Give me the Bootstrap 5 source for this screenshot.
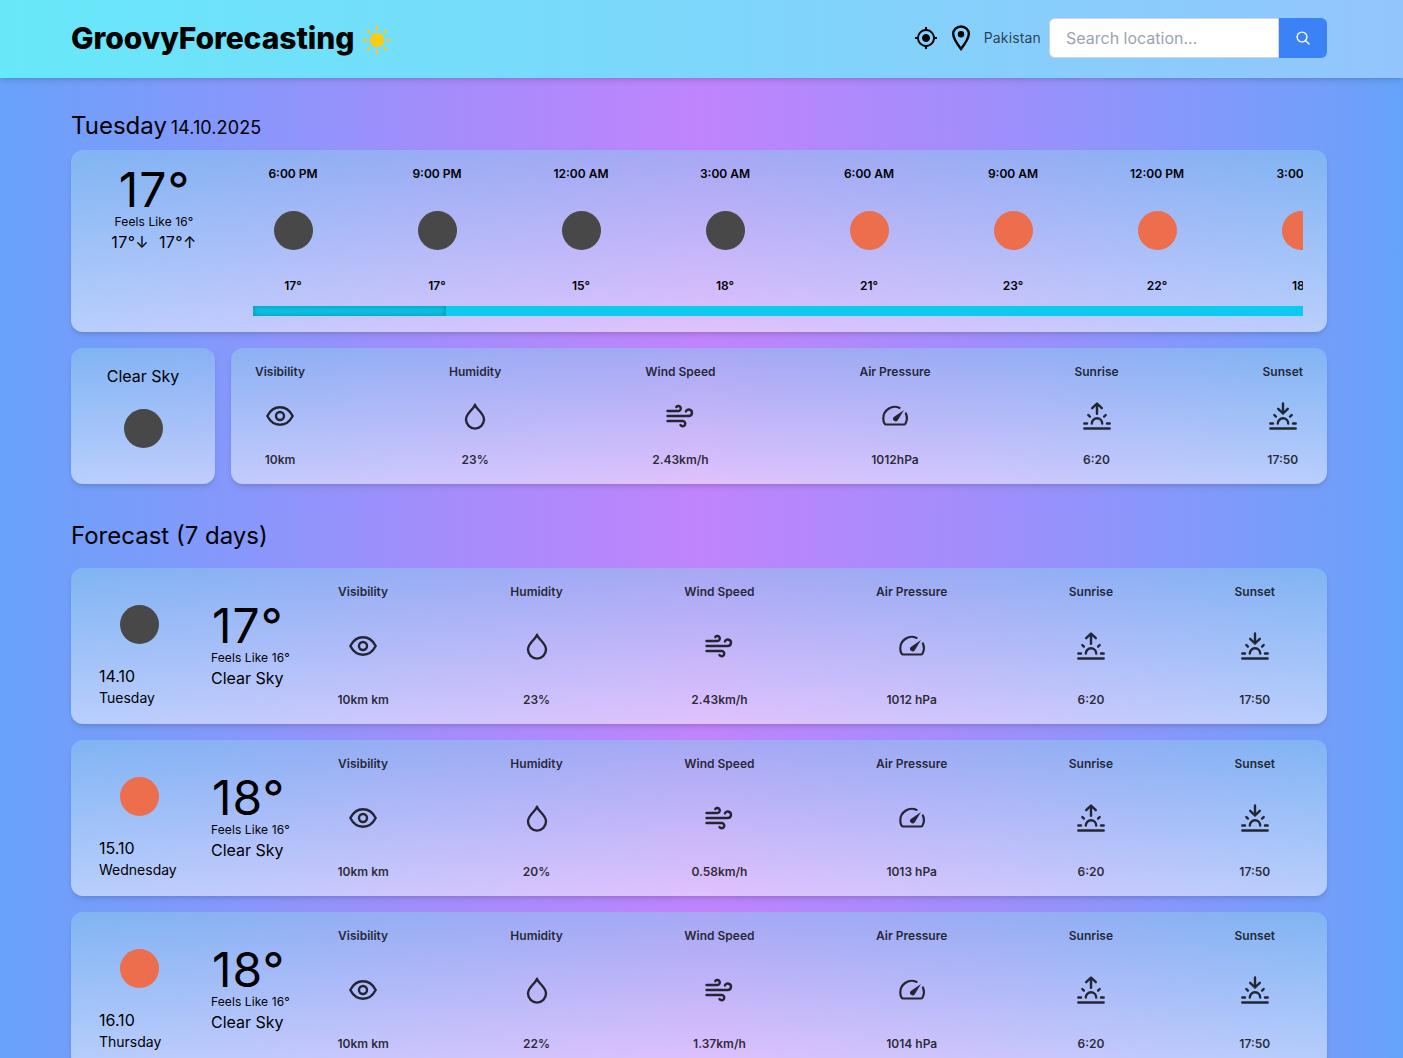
<!DOCTYPE html>
<html lang="en">
<head>
<meta charset="utf-8">
<meta name="viewport" content="width=device-width, initial-scale=1">
<title>GroovyForecasting</title>
<link href="https://cdn.jsdelivr.net/npm/bootstrap@5.3.0/dist/css/bootstrap.min.css" rel="stylesheet">
<style>
html{overflow:hidden}
body{font-family:Inter,sans-serif;font-size:16px;line-height:24px;color:#000;height:1058px;overflow:hidden;background:linear-gradient(to right,#68a2fb,#709ffa 4.3%,#8598fb 16%,#a18efb 30%,#c084fc 50%,#a18efb 70%,#8598fb 84%,#709ffa 95.7%,#65a3fa)}
.wrap{width:1256px;margin-left:71px}
.topbar{height:78px;padding-bottom:2px;background:linear-gradient(to right,#67e8f9,#93c5fd);box-shadow:0 4px 6px -1px rgba(0,0,0,.1),0 2px 4px -2px rgba(0,0,0,.1)}
.brand{font-size:30px;line-height:36px;font-weight:800;letter-spacing:-.06px}
.place{font-size:14px;line-height:20px;letter-spacing:.15px;color:rgba(17,24,39,.8)}
.search-field{width:230px;height:40px;border:1px solid #d1d5db;border-radius:6px 0 0 6px;padding:0 16px;font-size:16px}
.search-field::placeholder{color:#9ca3af;opacity:1}
.search-btn{width:48px;height:40px;border-radius:0 6px 6px 0;background:#3b82f6;border:0;padding:0;color:#fff}
.heading{font-size:24px;line-height:32px;font-weight:400}
.heading.today-title{height:64px;padding-top:32px;margin-bottom:8px}
.heading small{font-size:18px;line-height:28px;letter-spacing:.1px;margin-left:-3px}
.heading.week-title{margin:36px 0 16px}
.panel{border-radius:12px;padding:16px 24px;background:linear-gradient(to bottom,rgba(142,202,236,.5),rgba(255,255,255,.5));box-shadow:0 4px 6px -1px rgba(0,0,0,.1),0 2px 4px -2px rgba(0,0,0,.1)}
.big{font-size:48px;line-height:48px;letter-spacing:1px;padding-left:1px}
.tiny{font-size:12px;line-height:16px;letter-spacing:.1px}
.lohi{letter-spacing:.4px}
.now{flex:none;width:118px;margin-right:40px}
.hours{gap:64px;overflow:hidden}
.hour{width:80px;flex:none;font-size:12px;line-height:16px;font-weight:600}
.wicon{width:80px;height:80px;display:flex;align-items:center;justify-content:center}
.wicon::before{content:"";width:39px;height:39px;border-radius:50%;background:#484849}
.wicon.day::before{background:#ec6e4c}
.track{height:10px;margin-top:12px;background:#0ccaf0}
.thumb{width:193px;height:10px;background:rgba(0,0,0,.02);box-shadow:inset 0 0 6px rgba(0,0,0,.3)}
.sky{width:144px;padding:16px 0}
.metric{display:flex;flex-direction:column;align-items:center;justify-content:space-between;font-size:12px;line-height:16px;font-weight:600;color:rgba(0,0,0,.8)}
.metric svg,.strokes{fill:none;stroke:currentColor;stroke-linecap:round;stroke-linejoin:round}
.metric svg{stroke-width:2.4}
.cards{gap:16px}
.dayrow{height:156px;padding:16px 52px 16px 28px}
.datecol{width:80px;margin-right:32px}
.tempcol{width:78.5px;margin-right:48px;white-space:nowrap}
.weekday{font-size:14px;line-height:20px}
</style>
<script src="https://cdn.jsdelivr.net/npm/bootstrap@5.3.0/dist/js/bootstrap.bundle.min.js"></script>
</head>
<body>
<svg class="d-none">
<symbol id="eye" viewBox="0 0 32 32"><path d="M3.300 16c3-5.700 7.300-8.700 12.700-8.700S25.700 10.300 28.700 16c-3 5.700-7.300 8.700-12.700 8.700S6.300 21.700 3.300 16z"/><circle cx="16" cy="16" r="4"/></symbol>
<symbol id="drop" viewBox="0 0 32 32"><path d="M16 4.800c-.8 4.200-9 8-9 14.800a9 9 0 0 0 18 0c0-6.800-8.200-10.600-9-14.800z"/></symbol>
<symbol id="wind" viewBox="0 0 32 32"><path d="M3.500 11H14.300a2.500 2.500 0 1 0-2-4M3.500 16h21.300a3.200 3.200 0 1 0-2.900-4.600M3.500 21h15.200a2.600 2.600 0 1 1-2.200 4"/></symbol>
<symbol id="gauge" viewBox="0 0 32 32"><path stroke-width="2.200" d="M20.600 7.900A11.500 11.500 0 0 0 4.300 18.500c0 2 .4 3.700 1.200 5 .4.700.9 1 1.600 1h17.800c.7 0 1.200-.3 1.600-1 1.700-3.200 1.700-7 .4-10"/><path fill="currentColor" stroke="none" d="M25 9.900l-6.200 10.300a2.600 2.600 0 1 1-4-3.300z"/></symbol>
<symbol id="rise" viewBox="0 0 32 32"><path d="M3.300 28.500h25.400M3.300 23.500h2.700M26 23.500h2.700M7.300 15l1.600 1.600M24.700 15l-1.600 1.600M10.800 23.500a5.200 5.200 0 0 1 10.400 0"/><path d="M16 3.700v10M11.200 8.200L16 3.500l4.800 4.700"/></symbol>
<symbol id="set" viewBox="0 0 32 32"><path d="M3.300 28.500h25.400M3.300 23.500h2.700M26 23.500h2.700M7.300 15l1.600 1.600M24.700 15l-1.600 1.600M10.800 23.500a5.200 5.200 0 0 1 10.400 0"/><path d="M16 3.500v10M11.200 8.800L16 13.500l4.800-4.700"/></symbol>
</svg>
<header class="topbar position-relative">
<div class="wrap h-100 d-flex align-items-center justify-content-between">
<div class="d-flex align-items-center"><span class="brand">GroovyForecasting</span>
<svg width="28" height="28" viewBox="0 0 28 28" style="margin:3px 0 0 9px"><circle cx="14" cy="14" r="7.300" fill="#facc15"/><path stroke="#facc15" stroke-width="2.400" d="M14 .3v3.600M14 24v3.700M.3 14h3.600M24 14h3.700M4.300 4.300l2.400 2.400M21.300 21.300l2.400 2.400M4.300 23.700l2.400-2.400M21.300 6.700l2.400-2.400"/></svg></div>
<div class="d-flex align-items-center">
<svg width="24" height="24" viewBox="0 0 24 24"><path d="M12 8c-2.210 0-4 1.790-4 4s1.790 4 4 4 4-1.790 4-4-1.790-4-4-4zm8.940 3A8.994 8.994 0 0 0 13 3.060V1h-2v2.060A8.994 8.994 0 0 0 3.060 11H1v2h2.060A8.994 8.994 0 0 0 11 20.940V23h2v-2.060A8.994 8.994 0 0 0 20.940 13H23v-2h-2.060zM12 19c-3.870 0-7-3.130-7-7s3.130-7 7-7 7 3.130 7 7-3.130 7-7 7z"/></svg>
<svg width="24" height="28" viewBox="0 0 24 28" style="margin:0 11px 0 11px"><path fill="none" stroke="#000" stroke-width="2.400" d="M12 25C9 21 4.200 14.800 4.200 10a7.800 7.500 0 0 1 15.600 0c0 4.800-4.800 11-7.800 15z"/><circle cx="12" cy="10.300" r="3.200"/></svg>
<span class="place me-2">Pakistan</span>
<input class="search-field" type="text" placeholder="Search location..."><button class="search-btn d-flex align-items-center justify-content-center" type="button" aria-label="Search"><svg class="strokes" width="16" height="16" viewBox="0 0 16 16" stroke-width="1.400"><circle cx="7" cy="7" r="4.900"/><path d="M10.700 10.700L14 14"/></svg></button>
</div></div></header>
<main class="wrap">
<div class="heading today-title">Tuesday <small class="fw-normal">14.10.2025</small></div>
<section class="panel d-flex mb-3">
<div class="now text-center"><div class="big">17°</div><div class="tiny">Feels Like 16°</div><div class="lohi text-nowrap">17°↓&nbsp; 17°↑</div></div>
<div class="flex-fill overflow-hidden"><div class="hours d-flex text-center" id="hours"></div><div class="track"><div class="thumb"></div></div></div>
</section>
<div class="d-flex cards">
<section class="panel sky d-flex flex-column align-items-center">Clear Sky<i class="wicon"></i></section>
<section class="panel flex-fill d-flex justify-content-between" id="today"></section>
</div>
<div class="heading week-title">Forecast (7 days)</div>
<div class="d-flex flex-column cards" id="days"></div>
</main>
<script>
const metrics = v => ['Visibility','Humidity','Wind Speed','Air Pressure','Sunrise','Sunset'].map((n,i)=>`<div class="metric"><span>${n}</span><svg width="32" height="32"><use href="#${['eye','drop','wind','gauge','rise','set'][i]}"/></svg><span>${v[i]}</span></div>`).join('');
document.getElementById('hours').innerHTML = [['6:00 PM',17],['9:00 PM',17],['12:00 AM',15],['3:00 AM',18],['6:00 AM',21,1],['9:00 AM',23,1],['12:00 PM',22,1],['3:00 PM',18,1]].map(h=>`<div class="hour">${h[0]}<i class="wicon my-2${h[2]?' day':''}"></i>${h[1]}°</div>`).join('');
document.getElementById('today').innerHTML = metrics(['10km','23%','2.43km/h','1012hPa','6:20','17:50']);
document.getElementById('days').innerHTML = [['14.10','Tuesday',17,'23%','2.43','1012',''],['15.10','Wednesday',18,'20%','0.58','1013','day'],['16.10','Thursday',18,'22%','1.37','1014','day']].map(d=>`<section class="panel dayrow d-flex"><div class="datecol"><i class="wicon ${d[6]}"></i><div>${d[0]}</div><div class="weekday">${d[1]}</div></div><div class="tempcol align-self-center"><div class="big">${d[2]}°</div><div class="tiny">Feels Like 16°</div><div>Clear Sky</div></div><div class="flex-fill d-flex justify-content-between">${metrics(['10km km',d[3],d[4]+'km/h',d[5]+' hPa','6:20','17:50'])}</div></section>`).join('');
</script>
</body>
</html>
